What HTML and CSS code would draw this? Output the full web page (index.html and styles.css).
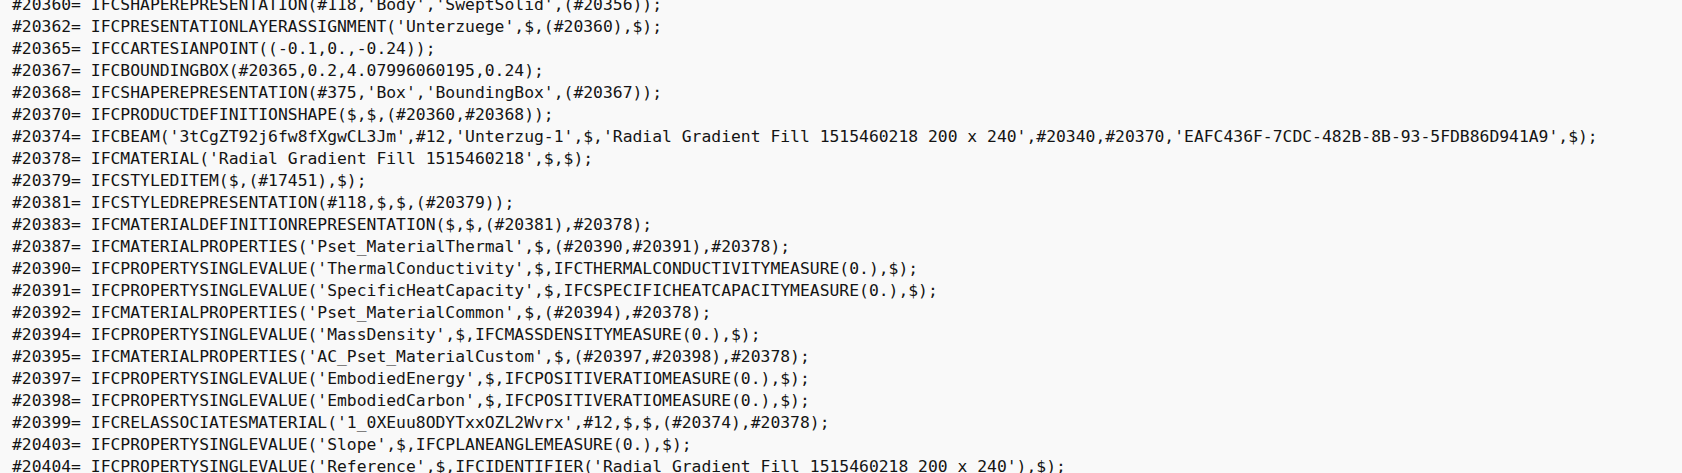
FILE: index.html
```html
<!DOCTYPE html>
<html>
<head>
<meta charset="utf-8">
<link rel="stylesheet" href="styles.css">
</head>
<body>
<pre class="code">#20360= IFCSHAPEREPRESENTATION(#118,'Body','SweptSolid',(#20356));
#20362= IFCPRESENTATIONLAYERASSIGNMENT('Unterzuege',$,(#20360),$);
#20365= IFCCARTESIANPOINT((-0.1,0.,-0.24));
#20367= IFCBOUNDINGBOX(#20365,0.2,4.07996060195,0.24);
#20368= IFCSHAPEREPRESENTATION(#375,'Box','BoundingBox',(#20367));
#20370= IFCPRODUCTDEFINITIONSHAPE($,$,(#20360,#20368));
#20374= IFCBEAM('3tCgZT92j6fw8fXgwCL3Jm',#12,'Unterzug-1',$,'Radial Gradient Fill 1515460218 200 x 240',#20340,#20370,'EAFC436F-7CDC-482B-8B-93-5FDB86D941A9',$);
#20378= IFCMATERIAL('Radial Gradient Fill 1515460218',$,$);
#20379= IFCSTYLEDITEM($,(#17451),$);
#20381= IFCSTYLEDREPRESENTATION(#118,$,$,(#20379));
#20383= IFCMATERIALDEFINITIONREPRESENTATION($,$,(#20381),#20378);
#20387= IFCMATERIALPROPERTIES('Pset_MaterialThermal',$,(#20390,#20391),#20378);
#20390= IFCPROPERTYSINGLEVALUE('ThermalConductivity',$,IFCTHERMALCONDUCTIVITYMEASURE(0.),$);
#20391= IFCPROPERTYSINGLEVALUE('SpecificHeatCapacity',$,IFCSPECIFICHEATCAPACITYMEASURE(0.),$);
#20392= IFCMATERIALPROPERTIES('Pset_MaterialCommon',$,(#20394),#20378);
#20394= IFCPROPERTYSINGLEVALUE('MassDensity',$,IFCMASSDENSITYMEASURE(0.),$);
#20395= IFCMATERIALPROPERTIES('AC_Pset_MaterialCustom',$,(#20397,#20398),#20378);
#20397= IFCPROPERTYSINGLEVALUE('EmbodiedEnergy',$,IFCPOSITIVERATIOMEASURE(0.),$);
#20398= IFCPROPERTYSINGLEVALUE('EmbodiedCarbon',$,IFCPOSITIVERATIOMEASURE(0.),$);
#20399= IFCRELASSOCIATESMATERIAL('1_0XEuu8ODYTxxOZL2Wvrx',#12,$,$,(#20374),#20378);
#20403= IFCPROPERTYSINGLEVALUE('Slope',$,IFCPLANEANGLEMEASURE(0.),$);
#20404= IFCPROPERTYSINGLEVALUE('Reference',$,IFCIDENTIFIER('Radial Gradient Fill 1515460218 200 x 240'),$);</pre>
</body>
</html>
```

FILE: styles.css
```css
html, body {
  margin: 0;
  padding: 0;
  background: #f9f9f9;
  overflow: hidden;
}

.code {
  margin: -6px 0 0 0;
  padding: 0 0 0 12px;
  font-family: "DejaVu Sans Mono", "Liberation Mono", monospace;
  font-size: 16.36px;
  line-height: 22px;
  color: #141414;
  white-space: pre;
}
```
